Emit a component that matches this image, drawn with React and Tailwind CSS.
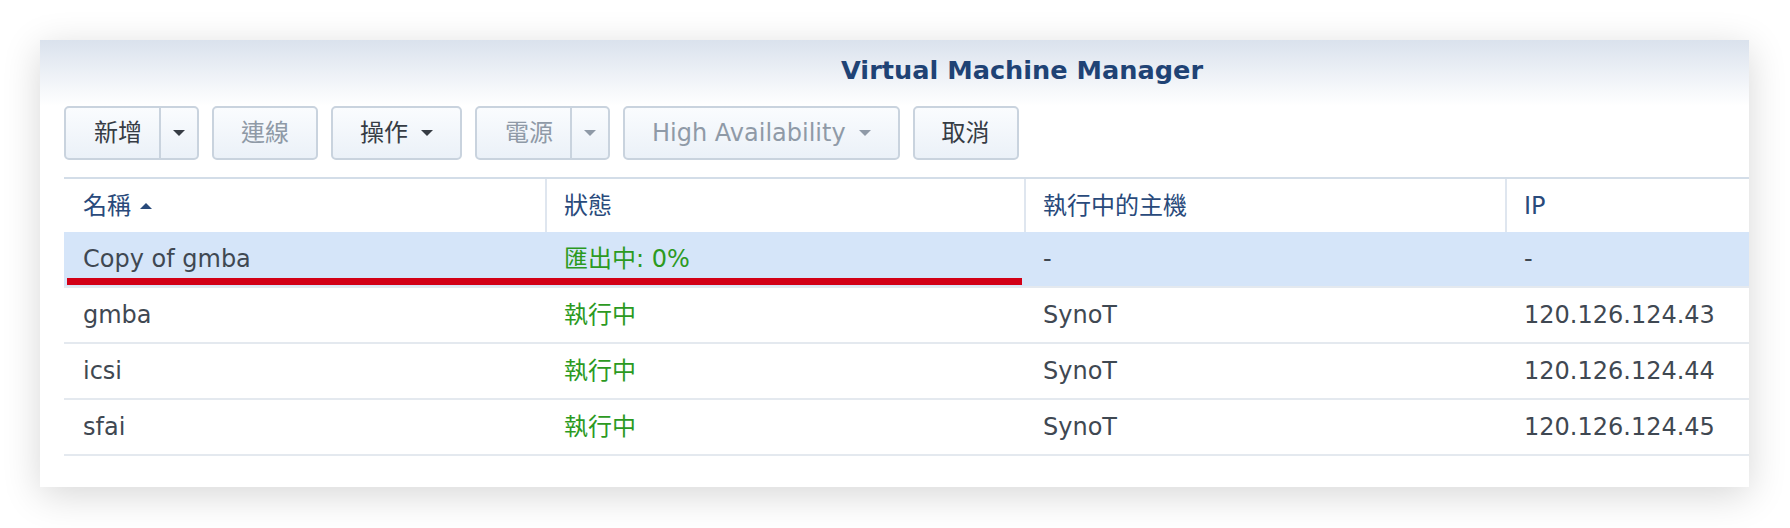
import React from 'react';

const Caret = ({ up, className }) => (
  <svg width="12" height="6" viewBox="0 0 12 6" className={className}>
    <path d={up ? 'M0 6h12L6 0z' : 'M0 0h12L6 6z'} fill="currentColor" />
  </svg>
);

const btnBase =
  'h-[54px] flex items-center rounded-[5px] border-2 border-[#c9d3de] bg-linear-to-b from-[#fafcfe] to-[#ebf1f8] text-[24px]';

const Button = ({ label, disabled, caret }) => (
  <div className={`${btnBase} px-[27px] ${disabled ? 'text-[#8f9aa7]' : 'text-[#363c44]'}`}>
    <span>{label}</span>
    {caret && <Caret className="ml-[13px]" />}
  </div>
);

const SplitButton = ({ label, disabled }) => (
  <div className={`${btnBase} ${disabled ? 'text-[#8f9aa7]' : 'text-[#363c44]'}`}>
    <span className="pl-[28px] pr-[17px]">{label}</span>
    <div className="h-full w-[38px] flex items-center justify-center border-l-2 border-[#c9d3de]">
      <Caret />
    </div>
  </div>
);

const rows = [
  { name: 'Copy of gmba', status: '匯出中: 0%', host: '-', ip: '-', selected: true },
  { name: 'gmba', status: '執行中', host: 'SynoT', ip: '120.126.124.43' },
  { name: 'icsi', status: '執行中', host: 'SynoT', ip: '120.126.124.44' },
  { name: 'sfai', status: '執行中', host: 'SynoT', ip: '120.126.124.45' },
];

export default function App() {
  return (
    <div className="w-[1790px] h-[528px] bg-white pt-[40px] pl-[40px] font-['DejaVu_Sans','Noto_Sans_CJK_TC',sans-serif]">
      <div className="w-[1709px] h-[447px] bg-white shadow-[0_8px_36px_rgba(0,0,0,0.16)]">
        <div className="h-[66px] flex items-center pl-[801px] pb-[4px] bg-linear-to-b from-[#dae2ed] to-white">
          <h1 className="text-[25.6px] font-bold text-[#1f4375] leading-none">Virtual Machine Manager</h1>
        </div>

        <div className="flex gap-[13px] pl-[24px]">
          <SplitButton label="新增" />
          <Button label="連線" disabled />
          <Button label="操作" caret />
          <SplitButton label="電源" disabled />
          <Button label="High Availability" disabled caret />
          <Button label="取消" />
        </div>

        <div className="mt-[17px] ml-[24px] border-t-2 border-[#d3dde8] text-[24px]">
          <div className="grid grid-cols-[481px_479px_481px_1fr] h-[53px] text-[#294a7b]">
            <div className="flex items-center pl-[19px] gap-[9px]">
              名稱
              <Caret up />
            </div>
            <div className="flex items-center pl-[17px] border-l-2 border-[#dfe6ef]">狀態</div>
            <div className="flex items-center pl-[17px] border-l-2 border-[#dfe6ef]">執行中的主機</div>
            <div className="flex items-center pl-[17px] border-l-2 border-[#dfe6ef]">IP</div>
          </div>

          {rows.map((r) => (
            <div
              key={r.name}
              className={`relative grid grid-cols-[481px_479px_481px_1fr] h-[56px] border-b-2 border-[#e4e9ef] text-[#3f4852] ${
                r.selected ? 'bg-[#d5e5f9]' : ''
              }`}
            >
              <div className="flex items-center pl-[19px]">{r.name}</div>
              <div className="flex items-center pl-[19px] text-[#2c9a1f]">{r.status}</div>
              <div className="flex items-center pl-[19px]">{r.host}</div>
              <div className="flex items-center pl-[19px]">{r.ip}</div>
              {r.selected && (
                <div className="absolute left-[3px] top-[46px] w-[955px] h-[7px] bg-[#d20016]" />
              )}
            </div>
          ))}
        </div>
      </div>
    </div>
  );
}
